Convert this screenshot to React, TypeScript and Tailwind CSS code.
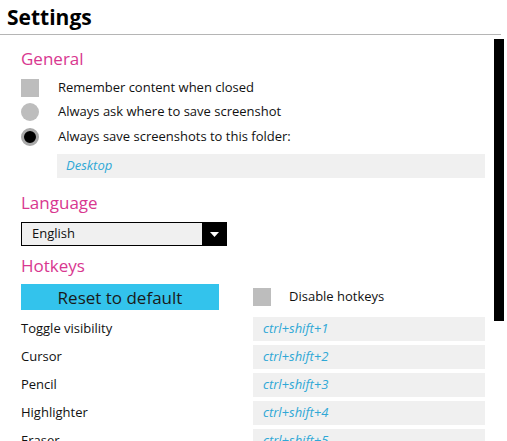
const pink = "text-[#d83790]";

const hotkeys = [
  ["Toggle visibility", "ctrl+shift+1"],
  ["Cursor", "ctrl+shift+2"],
  ["Pencil", "ctrl+shift+3"],
  ["Highlighter", "ctrl+shift+4"],
  ["Eraser", "ctrl+shift+5"],
];

const Heading = ({ children }: { children: string }) => (
  <h2 className={`text-[17px] leading-6 h-6 ${pink}`}>{children}</h2>
);

const Box = () => <span className="w-[18px] h-[18px] bg-[#bdbdbd] shrink-0" />;

export default function App() {
  return (
    <div
      className="w-[507px] h-[441px] overflow-hidden bg-white text-[#111] relative"
      style={{ fontFamily: '"Open Sans", "Noto Sans", sans-serif' }}
    >
      <div className="h-[35px] border-b border-[#b5b5b5] w-[501px] px-[7px] flex items-center">
        <h1 className="text-[21px] font-bold leading-none text-black">Settings</h1>
      </div>

      {/* scrollbar thumb */}
      <div className="absolute left-[494px] top-[39px] w-[10px] h-[282px] bg-black" />

      <div className="pl-[21px] pr-[22px] pt-[12px] flex flex-col text-[13px] w-[507px]">
        <Heading>General</Heading>
        <div className="flex flex-col mt-[5px]">
          <div className="flex items-center h-6 gap-[19px]">
            <Box />
            <span>Remember content when closed</span>
          </div>
          <div className="flex items-center h-6 gap-[19px]">
            <span className="w-[18px] h-[18px] rounded-full bg-[#bdbdbd] shrink-0" />
            <span>Always ask where to save screenshot</span>
          </div>
          <div className="flex items-center h-6 gap-[19px] mt-px">
            <span className="w-[18px] h-[18px] rounded-full bg-black border-[3px] border-[#a9a9a9] shrink-0" />
            <span>Always save screenshots to this folder:</span>
          </div>
          <div className="ml-[36px] mt-[5px] h-6 w-[428px] bg-[#f0f0f0] flex items-center pl-[9px] italic text-[#2fa8d6]">
            Desktop
          </div>
        </div>

        <div className="mt-[13px]">
          <Heading>Language</Heading>
        </div>
        <div className="mt-[7px] w-[206px] h-6 border border-black bg-[#f0f0f0] flex items-center">
          <span className="flex-1 pl-[10px]">English</span>
          <span className="w-6 h-full bg-black flex items-center justify-center">
            <svg width="9" height="5" viewBox="0 0 9 5">
              <path d="M0 0h9L4.5 5z" fill="#fff" />
            </svg>
          </span>
        </div>

        <div className="mt-[8px]">
          <Heading>Hotkeys</Heading>
        </div>
        <div className="mt-[6px] flex items-center">
          <button className="w-[198px] h-[26px] bg-[#33c3ec] text-[17px] leading-none text-[#1a1a1a]">
            Reset to default
          </button>
          <div className="ml-[34px] flex items-center gap-[18px]">
            <Box />
            <span>Disable hotkeys</span>
          </div>
        </div>

        <div className="mt-[7px] flex flex-col gap-1">
          {hotkeys.map(([label, keys]) => (
            <div key={label} className="flex items-center h-6">
              <span className="w-[232px]">{label}</span>
              <span className="w-[232px] h-6 bg-[#f0f0f0] flex items-center pl-[10px] italic text-[#2fa8d6]">
                {keys}
              </span>
            </div>
          ))}
        </div>
      </div>
    </div>
  );
}
